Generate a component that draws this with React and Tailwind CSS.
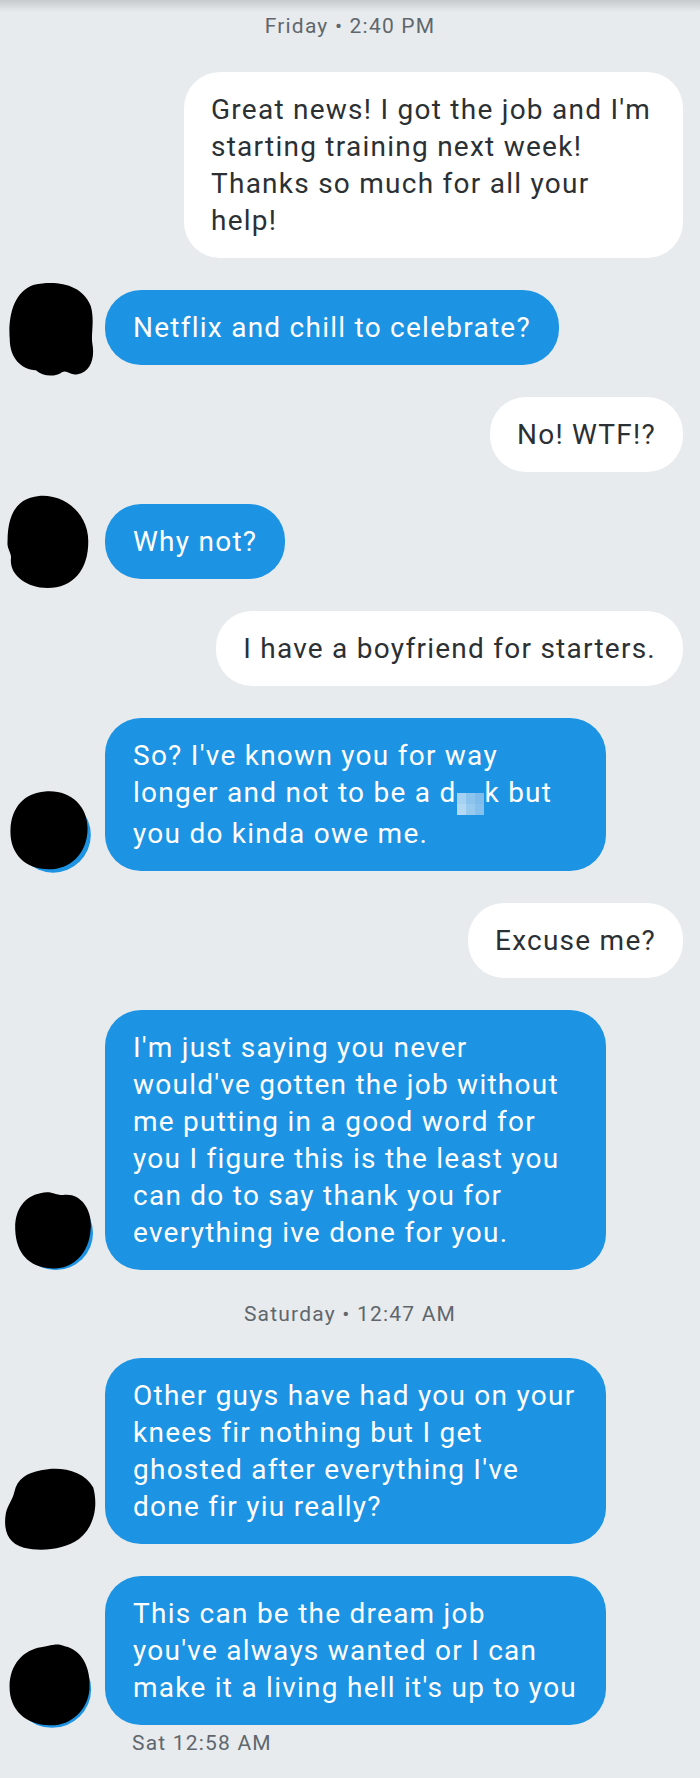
const font = { fontFamily: 'Roboto, "Noto Sans", sans-serif' };

// redacted avatar blobs, drawn in a 0..100 box
const blobs = {
    a: 'M30,3 C55,-2 85,2 95,25 C100,40 95,55 97,65 C100,80 95,95 80,97 C72,99 68,92 62,95 C55,100 40,100 32,93 C15,92 2,80 2,60 C0,40 5,10 30,3 Z',
    b: 'M40,2 C70,0 98,20 98,50 C98,80 80,99 50,99 C25,99 5,85 7,68 C8,62 2,58 3,50 C3,20 15,4 40,2 Z',
    c: 'M45,3 C75,0 98,20 97,50 C96,80 75,98 50,98 C20,98 2,78 3,50 C4,22 20,5 45,3 Z',
    d: 'M35,4 C50,0 55,8 65,6 C85,4 100,25 97,50 C95,80 75,99 50,98 C20,97 5,78 4,50 C3,25 15,8 35,4 Z',
    e: 'M40,5 C60,0 85,5 95,25 C100,45 97,70 80,85 C65,97 40,100 22,95 C5,90 0,75 3,55 C5,45 10,40 12,30 C15,15 25,8 40,5 Z',
    f: 'M40,5 C55,2 60,0 68,4 C88,8 99,30 97,55 C95,80 75,99 50,98 C22,97 3,80 3,52 C3,25 20,8 40,5 Z',
};

const Avatar = ({ shape, className, peek }) => (
    <svg viewBox="0 0 100 100" preserveAspectRatio="none" className={`blur-[0.7px] overflow-visible shrink-0 ${className}`}>
        {peek && <ellipse cx={peek[0]} cy={peek[1]} rx="46" ry="46" fill="#1c93e3" />}
        <path d={blobs[shape]} fill="#000" />
    </svg>
);

const Stamp = ({ children, className = '' }) => (
    <div className={`text-[21px] tracking-[1.2px] leading-[28px] text-[#5f676d] whitespace-nowrap ${className}`}>{children}</div>
);

const Mine = ({ children, wide }) => (
    <div className="flex justify-end pr-[17px]">
        <div className={`bg-white rounded-[36px] px-[27px] py-[19px] text-[28px] tracking-[1.25px] leading-[37px] text-[#2b3034] whitespace-nowrap ${wide ? 'w-[499px]' : ''}`}>
            {children}
        </div>
    </div>
);

const Theirs = ({ children, avatar, wide }) => (
    <div className="flex items-end">
        {/* zero-height slot so the blob never sets the row height */}
        <div className="w-[105px] h-0 shrink-0 flex items-end">{avatar}</div>
        <div className={`bg-[#1c93e3] rounded-[36px] px-[28px] py-[19px] text-[28px] tracking-[1.25px] leading-[37px] text-white whitespace-nowrap ${wide ? 'w-[501px]' : ''}`}>
            {children}
        </div>
    </div>
);

const Censor = () => (
    <span className="inline-grid grid-cols-3 grid-rows-2 w-[27px] h-[22px] align-[-2px] mr-[1px]">
        <span className="bg-[#a6d1f3]" />
        <span className="bg-[#8cc4ee]" />
        <span className="bg-[#7fbcec]" />
        <span className="bg-[#b3d8f4]" />
        <span className="bg-[#98caf0]" />
        <span className="bg-[#86c0ed]" />
    </span>
);

export default function App() {
    return (
        <div className="w-[700px] h-[1778px] bg-[#e8ebee] overflow-hidden" style={font}>
            <div className="h-[12px] bg-gradient-to-b from-[#c6cacd] to-[#e8ebee]" />
            <Stamp className="text-center">Friday • 2:40 PM</Stamp>

            <div className="flex flex-col gap-[32px] mt-[32px]">
                <Mine wide>
                    Great news! I got the job and I'm<br />
                    starting training next week!<br />
                    Thanks so much for all your<br />
                    help!
                </Mine>
                <Theirs avatar={<Avatar shape="a" className="ml-[8px] w-[87px] h-[95px] -mb-[12px]" />}>
                    Netflix and chill to celebrate?
                </Theirs>
                <Mine>No! WTF!?</Mine>
                <Theirs avatar={<Avatar shape="b" className="ml-[5px] w-[85px] h-[95px] -mb-[10px]" />}>
                    Why not?
                </Theirs>
                <Mine>I have a boyfriend for starters.</Mine>
                <Theirs wide avatar={<Avatar shape="c" peek={[55, 56]} className="ml-[8px] w-[82px] h-[82px]" />}>
                    So? I've known you for way<br />
                    longer and not to be a d<Censor />k but<br />
                    you do kinda owe me.
                </Theirs>
                <Mine>Excuse me?</Mine>
                <Theirs wide avatar={<Avatar shape="d" peek={[54, 54]} className="ml-[12px] w-[81px] h-[80px]" />}>
                    I'm just saying you never<br />
                    would've gotten the job without<br />
                    me putting in a good word for<br />
                    you I figure this is the least you<br />
                    can do to say thank you for<br />
                    everything ive done for you.
                </Theirs>
                <Stamp className="text-center -my-[2px]">Saturday • 12:47 AM</Stamp>
                <Theirs wide avatar={<Avatar shape="e" className="ml-[3px] w-[95px] h-[86px] -mb-[8px]" />}>
                    Other guys have had you on your<br />
                    knees fir nothing but I get<br />
                    ghosted after everything I've<br />
                    done fir yiu really?
                </Theirs>
                <Theirs wide avatar={<Avatar shape="f" peek={[53, 55]} className="ml-[7px] w-[85px] h-[84px] -mb-[2px]" />}>
                    This can be the dream job<br />
                    you've always wanted or I can<br />
                    make it a living hell it's up to you
                </Theirs>
            </div>
            <Stamp className="pl-[132px] mt-[4px]">Sat 12:58 AM</Stamp>
        </div>
    );
}
